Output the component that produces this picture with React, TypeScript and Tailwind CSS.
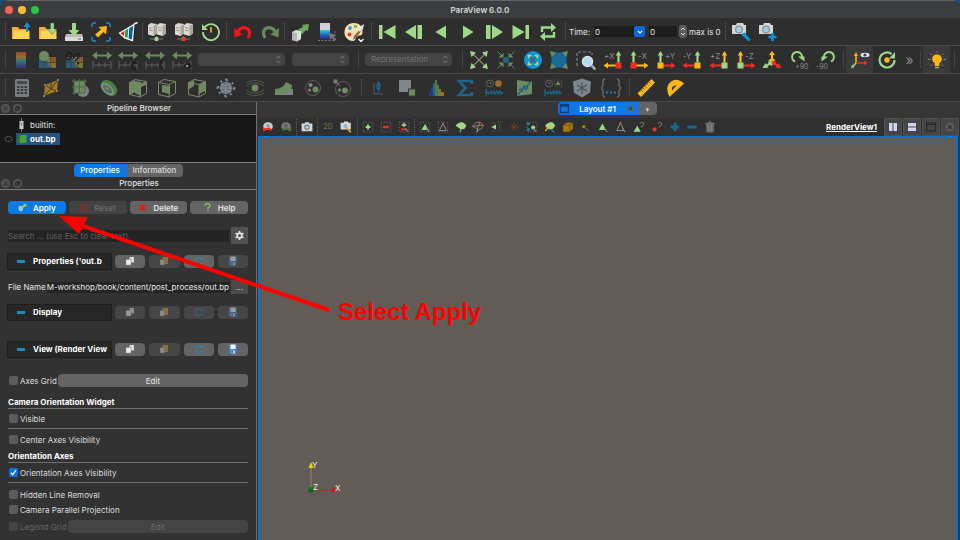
import type { ReactNode } from "react";

type Tool = { name: string; icon: ReactNode; dim?: boolean; active?: boolean };

const Svg = ({ children, size = 20 }: { children: ReactNode; size?: number }) => (
  <svg width={size} height={size} viewBox="0 0 20 20" fill="none" className="shrink-0">
    {children}
  </svg>
);

const G = "#9fd888";
const Y = "#fdb913";
const R = "#f52a22";
const B = "#1093d4";

/* ---------- shared icon parts ---------- */

const Folder = ({ children }: { children?: ReactNode }) => (
  <Svg>
    <path d="M1 5h6l1.5 2H16v10H1z" fill="#f2a93c" />
    <path d="M3 8.500h15.500V17H2z" fill="#fbd654" />
    {children}
  </Svg>
);

const Server = ({ dot }: { dot: ReactNode }) => (
  <Svg>
    {[1, 10].map((x) => (
      <g key={x} transform={`translate(${x} 0)`}>
        <path d="M0 3l3-2 6 1v9.500L5.500 14 0 12.500z" fill="#dcd7d2" />
        <path d="M5.500 4L9 2v9.500L5.500 14z" fill="#aaa49f" />
        <path d="M1 5.500l3.500.7M1 8l3.500.7" stroke="#8a847f" strokeWidth=".8" />
      </g>
    ))}
    <path d="M9.500 14v3M3 17h13" stroke="#777" strokeWidth="1" />
    {dot}
  </Svg>
);

const Rescale = ({ children }: { children?: ReactNode }) => (
  <Svg>
    <path d="M0 5.500l5-4v3h10v-3l5 4-5 4v-3H5v3z" fill={G} />
    <path d="M1 11v8M19 11v8M1 15h18M7 12.500v5M13 12.500v5" stroke="#888" strokeWidth="1" />
    {children}
  </Svg>
);

const Cells = () => (
  <>
    <rect x="1" y="7" width="17" height="11" fill="#2c86b8" />
    <path d="M7 7h11v11l-6-1z" fill="#c8b23f" />
    <path d="M13 7h5v6h-5z" fill="#d97a2a" />
    <path d="M1 12.500h17M6.500 7v11M12.500 7v11" stroke="#4c4c4c" strokeWidth=".7" />
  </>
);

const CubeEdges = () => (
  <path
    d="M1.500 4.500L7 1.500l11.500 2v12L12 19 1.500 16.500zM1.500 4.500L12 6.500l6.500-3M12 6.500V19"
    stroke="#c8cba0"
    strokeWidth="1"
  />
);

const Corners = ({ color }: { color: string }) => (
  <path
    d="M1 1l6 1.500L2.500 7zM19 1l-6 1.500L17.500 7zM1 19l6-1.500L2.500 13zM19 19l-6-1.500 4.500-4.500z"
    fill={color}
  />
);

type ViewAxisProps = { label: string; side: "left" | "right"; up: string; across: string; box: string };

const ViewAxis = ({ label, side, up, across, box }: ViewAxisProps) => (
  <Svg>
    <g transform={side === "right" ? "translate(20 0) scale(-1 1)" : undefined}>
      <path d="M4.500 1L7.300 5.500H5.600v7H3.400v-7H1.700z" fill={up} />
      <path d="M19.500 15.500L15 18.500v-2H7v-2h8v-2z" fill={across} />
      <rect x="1.500" y="12.500" width="6" height="6" fill={box} />
    </g>
    <text
      x={side === "right" ? 1 : 9}
      y="9"
      fontSize="8"
      fill="#8c8c8c"
      fontFamily="Inter, sans-serif"
    >
      {label}
    </text>
  </Svg>
);

const Camera = ({ children }: { children?: ReactNode }) => (
  <Svg>
    <path d="M1 3h4l1-2h6l1 2h2v9H1z" fill="#d6d6d4" />
    <circle cx="8" cy="7.500" r="4" fill="#8b9299" />
    <circle cx="8" cy="7.500" r="2.700" fill="#9fd0ea" />
    {children}
  </Svg>
);

/* ---------- first toolbar ---------- */

const fileTools: Tool[] = [
  { name: "Open", icon: <Folder><path d="M16 0l3.500 5H17v5h-2V5h-2.500z" fill={B} /></Folder> },
  {
    name: "Load state",
    icon: <Folder><path d="M12.500 1h3.500v6h3l-4.700 5.500L9.500 7h3z" fill={G} stroke="#3f6a35" strokeWidth=".5" /></Folder>,
  },
  {
    name: "Save data",
    icon: (
      <Svg>
        <path d="M2 12h16l1 3v4H1v-4z" fill="#b9b9b9" />
        <path d="M1 15h18v4H1z" fill="#dadada" />
        <path d="M14 17h3" stroke="#666" />
        <path d="M8 1h4v7h3.500L10 14 4.500 8H8z" fill={G} />
      </Svg>
    ),
  },
  {
    name: "Reset session",
    icon: (
      <Svg>
        <path d="M1 5V3q0-2 2-2h2M15 1h2q2 0 2 2v2M19 15v2q0 2-2 2h-2M5 19H3q-2 0-2-2v-2" stroke={B} strokeWidth="1.500" />
        <path d="M7.500 5l8.500-1-1 8.500-2.500-2.500L7 15.500 4 12.500 10 7.500z" fill={Y} />
      </Svg>
    ),
  },
  {
    name: "Catalyst",
    icon: (
      <Svg>
        <path d="M.5 11L16.500 1.500 15 19.500 6.500 16.500z" fill="#fff" />
        <path d="M16 2l3.500-1.500" stroke="#fff" strokeWidth="1.500" />
        <path d="M2.500 11.200l4-2.400-.5 5.500z" fill="#d2232a" />
        <path d="M7.300 8.300l3.200-1.900-1 9.600-2.700-1z" fill="#28a249" />
        <path d="M11.300 6l3.900-2.300-1.400 13.800-3.300-1.100z" fill="#0d5ba8" />
      </Svg>
    ),
  },
];

const serverTools: Tool[] = [
  { name: "Connect", icon: <Server dot={<circle cx="9.500" cy="17" r="2.200" fill={G} />} /> },
  { name: "Disconnect", icon: <Server dot={<rect x="7.500" y="15" width="4" height="4" fill="#e8432e" />} /> },
  {
    name: "Reload",
    icon: (
      <Svg>
        <path d="M3.500 5.500A8 8 0 1 1 2 10" stroke={G} strokeWidth="1.900" />
        <path d="M1 2v6h6z" fill={G} />
        <path d="M10 5v5.500" stroke={Y} strokeWidth="1.600" />
      </Svg>
    ),
  },
];

const undoTools: Tool[] = [
  {
    name: "Undo",
    icon: (
      <Svg>
        <path d="M4.500 11C7 3.500 16 4.500 16.500 10.500q0 3-1.500 5.500" stroke="#f31414" strokeWidth="3.200" />
        <path d="M1 6l.5 9.500 8-3z" fill="#f31414" />
      </Svg>
    ),
  },
  {
    name: "Redo",
    dim: true,
    icon: (
      <Svg>
        <path d="M15.500 11C13 3.500 4 4.500 3.500 10.500q0 3 1.500 5.500" stroke={G} strokeWidth="3.200" />
        <path d="M19 6l-.5 9.500-8-3z" fill={G} />
      </Svg>
    ),
  },
];

const displayTools: Tool[] = [
  {
    name: "Auto apply",
    icon: (
      <Svg>
        <path d="M2 10l4-2 5 1v8l-4 2.500-5-1.500z" fill="#dfe2dc" />
        <path d="M2 10l5 1v8.500L2 18z" fill="#b4b8b1" />
        <path d="M7 8l6-3-1-2 7-1-1 7-2-1-5 5V9z" fill="#6fa860" />
      </Svg>
    ),
  },
  {
    name: "Scalar bar",
    icon: (
      <Svg>
        <defs>
          <linearGradient id="bar" x2="0" y2="1">
            <stop offset="0" stopColor="#35c8d6" />
            <stop offset=".5" stopColor="#1d6fc4" />
            <stop offset="1" stopColor="#27277d" />
          </linearGradient>
        </defs>
        <rect x="3" y="1" width="10" height="8" fill="#cfd3d8" />
        <rect x="3" y="8" width="10" height="9" fill="url(#bar)" />
        <path d="M1 18.500h17V9" stroke="#777" strokeDasharray="2 1.500" />
        <path d="M12 11l7 2-2.500 1.500 2.500 3-1.500 1.500-2.800-3-1.700 2z" fill="#777" />
      </Svg>
    ),
  },
  {
    name: "Palette",
    icon: (
      <Svg>
        <path d="M10 1C4 1 .5 5 .5 10.500S5 19 9 19c3 0 2-3 4-4.500s5.500 0 5.500-4.500C18.500 4 15 1 10 1z" fill="#fbe0b5" />
        <circle cx="6" cy="6" r="1.900" fill="#2b9fd8" />
        <circle cx="11.500" cy="4.500" r="1.800" fill="#7db95f" />
        <circle cx="5.500" cy="12.500" r="2" fill="#e33b2e" />
        <path d="M18 5l1.500 1L12 16l-3 2 1-4z" fill="#8b6a3c" />
        <path d="M17 4l3-2-1 5-3 3-1.500-1.500z" fill="#e8e6e0" />
        <path d="M14.500 17l2.500 2.500 2.500-2.500" stroke="#fff" strokeWidth="1.300" />
      </Svg>
    ),
  },
];

const vcrTools: Tool[] = [
  { name: "First frame", icon: <Svg><path d="M2 3h3.500v14H2zM18.500 3v14L6.500 10z" fill={G} /></Svg> },
  { name: "Previous frame", icon: <Svg><path d="M12 3v14L1 10zM13.500 3H18v14h-4.500z" fill={G} /></Svg> },
  { name: "Reverse", icon: <Svg><path d="M15 3.500v13L4.500 10z" fill={G} /></Svg> },
  { name: "Play", icon: <Svg><path d="M5 3.500v13L15.500 10z" fill={G} /></Svg> },
  { name: "Next frame", icon: <Svg><path d="M8 3v14l11-7zM2 3h4.500v14H2z" fill={G} /></Svg> },
  { name: "Last frame", icon: <Svg><path d="M14.500 3H18v14h-3.500zM1.500 3v14l12-7z" fill={G} /></Svg> },
  {
    name: "Loop",
    icon: (
      <Svg>
        <path d="M4 10V5.500h10M16 10v4.500H6" stroke={G} strokeWidth="2.400" />
        <path d="M13 1l5 4.500-5 4.500zM7 10l-5 4.500L7 19z" fill={G} />
      </Svg>
    ),
  },
];

const cameraTools: Tool[] = [
  {
    name: "Adjust camera",
    icon: <Camera><path d="M12 11.500l2-.5 1 2 4 4.500-1.500 1.500-4.500-4.500-1.500-1z" fill={B} stroke={B} /></Camera>,
  },
  { name: "Add camera link", icon: <Camera><path d="M14.500 11v8M10.500 15h8" stroke={B} strokeWidth="2.600" /></Camera> },
];

/* ---------- second toolbar ---------- */

const colorTools: Tool[] = [
  {
    name: "Edit color map",
    dim: true,
    icon: (
      <Svg>
        <defs>
          <linearGradient id="map" x2="0" y2="1">
            <stop offset="0" stopColor="#e8562f" />
            <stop offset=".3" stopColor="#f3a32f" />
            <stop offset=".55" stopColor="#43b7b0" />
            <stop offset=".8" stopColor="#2f6ad0" />
            <stop offset="1" stopColor="#5b3aa5" />
          </linearGradient>
        </defs>
        <rect x="5" y="2" width="10" height="16" fill="url(#map)" />
      </Svg>
    ),
  },
  { name: "Use separate map", dim: true, icon: <Svg><Cells /><circle cx="6" cy="6" r="5" fill={G} /></Svg> },
  {
    name: "Unlink map",
    dim: true,
    icon: (
      <Svg>
        <Cells />
        <path d="M2 4q3-4 5 1l-3 5q-4 0-2-6M8 9l3-5q4-2 3 3l-4 4M3 1l2 2M12 12l2 2" stroke="#111" strokeWidth="1.500" />
      </Svg>
    ),
  },
  { name: "Rescale to data", dim: true, icon: <Rescale /> },
  {
    name: "Rescale to custom",
    dim: true,
    icon: <Rescale><path d="M19 13q-4-2-5 2t4 4" stroke="#111" strokeWidth="2" /></Rescale>,
  },
  {
    name: "Rescale over time",
    dim: true,
    icon: <Rescale><path d="M17 11q-4 4 0 8" stroke="#111" strokeWidth="2" /></Rescale>,
  },
  {
    name: "Rescale to visible",
    dim: true,
    icon: <Rescale><ellipse cx="15.500" cy="16" rx="4" ry="2.500" fill="#111" /><circle cx="15" cy="16" r="1.300" fill="#ddd" /></Rescale>,
  },
];

const viewTools: Tool[] = [
  { name: "Reset camera", icon: <Svg><path d="M3 3l14 14M17 3L3 17" stroke="#8a8d66" strokeWidth="1.200" /><Corners color={G} /></Svg> },
  {
    name: "Zoom to data",
    dim: true,
    icon: (
      <Svg>
        <path d="M7.500 7.500H2.500l5-5zM12.500 7.500v-5l5 5zM7.500 12.500v5l-5-5zM12.500 12.500h5l-5 5z" fill={G} />
        <path d="M1.500 1.500l4 4M18.500 1.500l-4 4M1.500 18.500l4-4M18.500 18.500l-4-4" stroke={G} strokeWidth="1" />
        <circle cx="10" cy="10" r="3" fill={B} />
      </Svg>
    ),
  },
  {
    name: "Reset camera closest",
    icon: (
      <Svg>
        <circle cx="10" cy="10" r="9" fill={B} />
        <path d="M6 6l8 8M14 6l-8 8" stroke="#555" strokeWidth="1.200" />
        <path d="M4.500 4.500l4.500.5-4 4zM15.500 4.500L11 5l4 4zM4.500 15.500L9 15l-4-4zM15.500 15.500L11 15l4-4z" fill={G} />
      </Svg>
    ),
  },
  { name: "Zoom closest", dim: true, icon: <Svg><rect x="2.500" y="2.500" width="15" height="15" rx="4" fill="#0aa0f0" /><Corners color={G} /></Svg> },
  {
    name: "Zoom to box",
    icon: (
      <Svg>
        <path d="M1 16V2h15v3" stroke="#888" strokeWidth="1.200" strokeDasharray="3 2" />
        <path d="M15.500 15.500l4 4" stroke="#aaa" strokeWidth="2.600" />
        <circle cx="11.500" cy="11.500" r="5" fill="#b5dcf3" stroke="#dce4e8" strokeWidth="1.500" />
      </Svg>
    ),
  },
  { name: "View +X", icon: <ViewAxis label="+X" side="right" up={G} across={Y} box={R} /> },
  { name: "View -X", icon: <ViewAxis label="-X" side="left" up={G} across={Y} box={R} /> },
  { name: "View +Y", icon: <ViewAxis label="+Y" side="left" up={G} across={R} box={Y} /> },
  { name: "View -Y", icon: <ViewAxis label="-Y" side="right" up={G} across={R} box={Y} /> },
  { name: "View +Z", icon: <ViewAxis label="+Z" side="right" up={Y} across={R} box={G} /> },
  { name: "View -Z", icon: <ViewAxis label="-Z" side="left" up={Y} across={R} box={G} /> },
  {
    name: "Isometric view",
    icon: (
      <Svg>
        <path d="M10 1l3 4h-2v5H9V5H7z" fill={Y} />
        <path d="M8 12l-3.500 2.500-1-1.500L.5 18l6-.3-1-1.500L9 14z" fill={G} />
        <path d="M12 12l3.500 2.500 1-1.500 3 5-6-.3 1-1.500L11 14z" fill={R} />
        <path d="M6.500 10l3.500-2 3.500 2-3.500 2z" fill={Y} />
        <path d="M6.500 10l3.500 2v4l-3.500-2z" fill={G} />
        <path d="M13.500 10L10 12v4l3.500-2z" fill={R} />
      </Svg>
    ),
  },
  {
    name: "Rotate +90",
    icon: (
      <Svg>
        <path d="M6 11.500A5 5 0 1 1 13 8" stroke={G} strokeWidth="2" />
        <path d="M9 6.500h6.500v5z" fill={G} />
        <text x="6" y="19" fontSize="7" fill="#8c8c8c" fontFamily="Inter, sans-serif">+90</text>
      </Svg>
    ),
  },
  {
    name: "Rotate -90",
    icon: (
      <Svg>
        <path d="M15 11.500A5 5 0 1 0 8 8" stroke={G} strokeWidth="2" />
        <path d="M12 6.500H5.500v5z" fill={G} />
        <text x="0" y="19" fontSize="7" fill="#8c8c8c" fontFamily="Inter, sans-serif">-90</text>
      </Svg>
    ),
  },
];

const axesTools: Tool[] = [
  {
    name: "Orientation axes",
    active: true,
    icon: (
      <Svg>
        <path d="M6 13V5" stroke={Y} strokeWidth="1.500" />
        <path d="M6 2l2 4H4z" fill={Y} />
        <path d="M6 13h9" stroke={R} strokeWidth="1.500" />
        <path d="M17.500 13L14 15.200v-4.400z" fill={R} />
        <path d="M6 13l-3.500 4" stroke={G} strokeWidth="1.500" />
        <path d="M1 18.500l1-4 2.500 2.500z" fill={G} />
        <ellipse cx="15" cy="5" rx="4.500" ry="2.200" fill="#e8e8f4" />
        <circle cx="15" cy="5" r="1.600" fill="#3a3a8c" />
      </Svg>
    ),
  },
  {
    name: "Show center",
    icon: (
      <Svg>
        <path d="M14.500 4A7.500 7.500 0 1 0 17.500 10" stroke={G} strokeWidth="2.200" />
        <path d="M18 2v6.500h-6z" fill={G} />
        <circle cx="10" cy="10" r="2.700" fill={Y} />
      </Svg>
    ),
  },
];

const lightTools: Tool[] = [
  {
    name: "Light kit",
    active: true,
    icon: (
      <Svg>
        <path d="M10 4.500a4.500 4.500 0 0 1 2.300 8.500v3H7.700v-3A4.500 4.500 0 0 1 10 4.500z" fill={Y} />
        <path d="M8 17.500h4" stroke="#aaa" strokeWidth="1.500" />
        <path d="M10 1v1.500M3.500 3.500l1.500 1.500M16.500 3.500L15 5M1 9.500h2.500M16.500 9.500H19M3.500 16L5 14.500M16.500 16L15 14.500" stroke="#8f8a70" strokeWidth="1" />
      </Svg>
    ),
  },
];

/* ---------- third toolbar ---------- */

const filterTools: Tool[] = [
  {
    name: "Calculator",
    dim: true,
    icon: (
      <Svg>
        <rect x="3" y="1" width="14" height="18" rx="1.500" fill="#b4bcc4" />
        <rect x="5" y="3" width="10" height="3" fill="#55606a" />
        {[8, 11, 14].map((y) => (
          <path key={y} d={`M5 ${y + 1}h2.500M8.800 ${y + 1}h2.500M12.500 ${y + 1}h2.500`} stroke="#444" strokeWidth="1.800" />
        ))}
      </Svg>
    ),
  },
  {
    name: "Contour",
    dim: true,
    icon: (
      <Svg>
        <path d="M4 7l13-5-1 11-13 5z" fill="#ffb81a" />
        <path d="M4 7l6 4 7-9M10 11l6 2M10 11l-7 7M10 11V4" stroke="#5d4c18" strokeWidth="1" />
        <path d="M3 6h2v2H3zM16 1h2v2h-2zM15 12h2v2h-2zM2 17h2v2H2z" fill="#c9c3a0" />
      </Svg>
    ),
  },
  {
    name: "Clip",
    dim: true,
    icon: (
      <Svg>
        <circle cx="13" cy="13" r="6" fill="#b8cdd8" />
        <rect x="4" y="3" width="11" height="12" fill={G} />
        <path d="M2 3h15M2 9h14M2 15h13M4 1v16M9.500 1v15M15 1v14" stroke="#6f9a60" strokeWidth="1" />
      </Svg>
    ),
  },
  {
    name: "Slice",
    dim: true,
    icon: (
      <Svg>
        <ellipse cx="10" cy="10" rx="9.500" ry="6.500" transform="rotate(42 10 10)" fill="#5fbf4c" />
        <ellipse cx="8.500" cy="11" rx="8" ry="4.500" transform="rotate(42 8.500 11)" fill="#c5dcc0" />
        <ellipse cx="8.500" cy="11" rx="5.500" ry="2.700" transform="rotate(42 8.500 11)" fill="#4d9dc2" />
        <ellipse cx="8" cy="10.500" rx="2.500" ry="1.200" transform="rotate(42 8 10.500)" fill={Y} />
      </Svg>
    ),
  },
  { name: "Threshold", dim: true, icon: <Svg><path d="M2 5l5-3v12l-5 3zM7 3l6 1v2l5-2v3l-5 2v9l-6-3z" fill={G} /><CubeEdges /></Svg> },
  { name: "Extract subset", dim: true, icon: <Svg><path d="M5 7l8 1v8l-8-2z" fill={G} /><CubeEdges /></Svg> },
  { name: "Extract region", dim: true, icon: <Svg><path d="M2 5l5-3v6l-5 3zM12 7l6-3v9l-6 3z" fill={G} /><CubeEdges /></Svg> },
  {
    name: "Glyph",
    dim: true,
    icon: (
      <Svg>
        <circle cx="10" cy="10" r="6.500" fill="#8aa4b8" />
        <path d="M4 10h12M10 4v12M5 6q5 3 10 0M5 14q5-3 10 0M7 5q-3 5 0 10M13 5q3 5 0 10" stroke="#dde6ec" strokeWidth=".9" />
        <circle cx="10" cy="10" r="8" stroke="#dde6ec" strokeWidth="1.600" strokeDasharray="2 4.283" />
        <path d="M10 .5v2M10 17.500v2M.5 10h2M17.500 10h2" stroke="#dde6ec" strokeWidth="1.500" />
      </Svg>
    ),
  },
  {
    name: "Stream tracer",
    dim: true,
    icon: (
      <Svg>
        <path d="M1 5q9-5 18 0M1 8q9-6 18 0M1 12q9 6 18 0M1 15q9 5 18 0" stroke="#737a60" strokeWidth="1" />
        <circle cx="10" cy="10" r="3.400" fill={G} />
      </Svg>
    ),
  },
  {
    name: "Warp",
    dim: true,
    icon: <Svg><path d="M1 12h9l9-1v6H1z" fill="#c0cad0" /><path d="M1 11q8 0 11-7l6 3q0 8-8 9H1z" fill={G} /></Svg>,
  },
  {
    name: "Group datasets",
    dim: true,
    icon: (
      <Svg>
        <circle cx="10" cy="10" r="7.500" stroke="#888" strokeWidth="1" />
        <circle cx="7.500" cy="7" r="2" fill="#c6d0d6" />
        <circle cx="12.500" cy="11.500" r="3" fill={G} />
        <circle cx="6.500" cy="12" r="1.500" fill="#c6d0d6" />
      </Svg>
    ),
  },
  {
    name: "Extract group",
    dim: true,
    icon: (
      <Svg>
        <circle cx="11" cy="11" r="7.500" stroke="#888" strokeWidth="1" />
        <circle cx="3.500" cy="3.500" r="2.200" fill="#a4bccb" />
        <path d="M4 4l4 4" stroke="#a4bccb" />
        <circle cx="13" cy="12.500" r="3" fill={G} />
        <circle cx="7.500" cy="12" r="1.500" fill="#c6d0d6" />
      </Svg>
    ),
  },
];

const Wave = () => <path d="M2 18.500V11M2 16l2-2 1 2 2-3 1 3 2-3 1 3 2-3 1 3 2-3 1 3 2-2" stroke={B} strokeWidth="1.300" />;

const analysisTools: Tool[] = [
  {
    name: "Plot over line",
    dim: true,
    icon: <Svg><path d="M6 5v11h9" stroke="#7a8187" strokeWidth="1" /><path d="M10.500 3v12M9 6q1.500-2 3 0v5q-1.500 2-3 0z" stroke={B} strokeWidth="1.200" /></Svg>,
  },
  {
    name: "Histogram view",
    dim: true,
    icon: <Svg><rect x="2" y="2" width="12" height="12" fill="#c3cfd7" /><rect x="11.500" y="11" width="7" height="7" fill={G} stroke="#33402e" /></Svg>,
  },
  {
    name: "Histogram",
    dim: true,
    icon: (
      <Svg>
        <path d="M3 18v-5h2v5zM5 18V9h2v9z" fill="#2740d8" />
        <path d="M7 18V5h2v13z" fill={B} />
        <path d="M9 18V2h2v16zM11 18V7h2v11z" fill="#6fc053" />
        <path d="M13 18v-7h2v7zM15 18v-4h3v4z" fill="#eea617" />
      </Svg>
    ),
  },
  { name: "Integrate", dim: true, icon: <Svg><path d="M17 6V3H4l6.500 7L4 17h13v-3" stroke={B} strokeWidth="2.600" /></Svg> },
  {
    name: "Plot selection over time",
    dim: true,
    icon: <Svg><circle cx="6" cy="5.500" r="3.500" stroke="#888" /><path d="M6 3.500v2h2" stroke="#888" /><circle cx="14.500" cy="5.500" r="3.300" fill="#f0a51e" /><Wave /></Svg>,
  },
  {
    name: "Probe",
    dim: true,
    icon: <Svg><path d="M3 2l13 2 2-1v13L3 18z" fill={G} /><path d="M3 17L17 4M5 12l2-1 1 2 2-5 2 4 2-4" stroke="#1d8fcf" strokeWidth="1.500" /></Svg>,
  },
  {
    name: "Plot data over time",
    dim: true,
    icon: <Svg><circle cx="6" cy="5.500" r="3.500" stroke="#888" /><path d="M6 3.500v2h2" stroke="#888" /><path d="M15 3l2.500 4h-5z" fill={G} /><path d="M11.500 2h7v7h-7z" stroke="#777" strokeDasharray="1 1" /><Wave /></Svg>,
  },
  {
    name: "Programmable filter",
    icon: (
      <Svg>
        <path d="M10 .5l9 3-1 11-8 5-8-5-1-11z" fill="#7b868e" />
        <path d="M10 4v12M5 7l10 6M15 7L5 13" stroke="#485158" strokeWidth="1.200" />
      </Svg>
    ),
  },
  {
    name: "Python calculator",
    icon: (
      <Svg>
        <path d="M4 1Q1.500 1 2 5t-2 5q2.500 1 2 5t2 4M16 1q2.500 0 2 4t2 5q-2.500 1-2 5t-2 4" stroke="#707070" strokeWidth="1.300" />
        <path d="M5 14.500h2M9 14.500h2M13 14.500h2" stroke="#257ba3" strokeWidth="1.800" />
      </Svg>
    ),
  },
];

const measureTools: Tool[] = [
  {
    name: "Ruler",
    icon: <Svg><path d="M15.500 1L19 4.500 5 19 1.500 15.500z" fill={Y} /><path d="M13 4l1.500 1.500M11 6l1.500 1.500M9 8l1.500 1.500M7 10l1.500 1.500M5 12l1.500 1.500" stroke="#7d5a06" strokeWidth="1" /></Svg>,
  },
  {
    name: "Protractor",
    icon: <Svg><path d="M4.500 19Q-.5 9 5.500 4T19 5.500z" fill={Y} /><path d="M7 12.500Q6 7.500 11.500 7.500z" fill="#2e2e2e" /></Svg>,
  },
];

/* ---------- render view toolbar ---------- */

const DashBox = () => <path d="M2 2h16v16H2z" stroke="#6e6e6e" strokeWidth="1.500" strokeDasharray="2 2.500" />;
const Cursor = () => <path d="M12 12l5 6" stroke="#8a8a8a" strokeWidth="1.800" />;
const Ball = ({ dim }: { dim?: boolean }) => (
  <>
    <path d="M2 10Q2 2 10 2t8 8q0 3-4 5H7q-5-2-5-5z" fill={dim ? "#787878" : "#cfcfcf"} />
    <circle cx="10" cy="8" r="3" fill={dim ? "#555f5c" : "#7fa7bc"} />
  </>
);

const undoViewTools: Tool[] = [
  { name: "Camera undo", icon: <Svg size={12}><Ball /><path d="M1 10l1 8 6-3q5-2 7 3 2-7-4-7l-5 1z" fill={R} /></Svg> },
  { name: "Camera redo", icon: <Svg size={12}><Ball dim /><path d="M19 10l-1 8-6-3q-5-2-7 3-2-7 4-7l5 1z" fill="#53704b" /></Svg> },
];

const captureTools: Tool[] = [
  {
    name: "Capture screenshot",
    icon: <Svg size={12}><path d="M1 4h5l1-2h6l1 2h5v13H1z" fill="#d8d8d8" /><circle cx="10" cy="10.500" r="4.500" fill="#697a88" /><circle cx="10" cy="10.500" r="2.500" fill="#b3d3e6" /></Svg>,
  },
];

const zoomTools: Tool[] = [
  { name: "2D mode", icon: <span className="text-[7px] font-medium text-[#6b6a4c]">2D</span> },
  {
    name: "Adjust view camera",
    icon: <Svg size={12}><path d="M1 3h5l1-2h6l1 2h4v11H1z" fill="#d8d8d8" /><circle cx="9" cy="8.500" r="3.500" fill="#8fb8cf" /><path d="M11 11l7 8" stroke="#d9a83a" strokeWidth="3" /></Svg>,
  },
];

const modifyTools: Tool[] = [
  { name: "Add selection", icon: <Svg size={12}><DashBox /><path d="M10 6v8M6 10h8" stroke={G} strokeWidth="3" /></Svg> },
  { name: "Subtract selection", icon: <Svg size={12}><DashBox /><path d="M5 10h10" stroke={R} strokeWidth="4" /></Svg> },
  { name: "Toggle selection", icon: <Svg size={12}><DashBox /><path d="M10 3v7M6 6.500h8" stroke={G} strokeWidth="2.500" /><path d="M5 14h10" stroke={R} strokeWidth="3" /><Cursor /></Svg> },
];

const selectTools: Tool[] = [
  { name: "Select cells", icon: <Svg size={12}><DashBox /><path d="M10 5l6 10H4z" fill={G} /><Cursor /></Svg> },
  { name: "Select points", icon: <Svg size={12}><DashBox /><path d="M10 4l6 12H4z" stroke="#9a9a9a" strokeWidth="1.500" /><circle cx="10" cy="4" r="1.800" fill="#c74a36" /></Svg> },
  { name: "Select cells through", icon: <Svg size={12}><path d="M1 8Q5 1 13 2l6 5-3 6-6 1-3-2z" fill={G} /><path d="M10 14l-2 5" stroke="#aaa" strokeWidth="2" /></Svg> },
  { name: "Select points through", icon: <Svg size={12}><path d="M1 9Q5 1 13 2l6 5-3 6-6 1-3-2-6-3zM1 9l17-2M9 13l4-11" stroke="#a0807a" strokeWidth="1.500" /><path d="M10 14l-2 5" stroke="#aaa" strokeWidth="2" /></Svg> },
  { name: "Polygon cells", icon: <Svg size={12}><path d="M2 10l8-4v8z" fill={G} /><path d="M13 2h5M14 17l4-4M16 6v5M4 3h5M4 17h5" stroke="#777" strokeWidth="1.500" strokeDasharray="2 2" /></Svg> },
  { name: "Polygon points", icon: <Svg size={12}><path d="M4 4l12 12M16 4L4 16M10 2v16M3 10h14" stroke="#a8432f" strokeWidth="1.500" strokeDasharray="2 2" /></Svg> },
  { name: "Select block", icon: <Svg size={12}><DashBox /><path d="M2 3h4v4H2zM2 12h4v4H2z" fill={B} /><circle cx="12" cy="11" r="3.500" fill={G} /><Cursor /></Svg> },
  { name: "Interactive cells", icon: <Svg size={12}><path d="M2 8Q6 1 14 2l5 5-4 6-6 1-4-2z" fill={G} /><path d="M2 17L9 8l5 3" stroke={Y} strokeWidth="2" /><path d="M12 14l5 5" stroke={B} strokeWidth="2" /></Svg> },
  { name: "Interactive block", icon: <Svg size={12}><path d="M2 7l6-4h10v10l-5 5H2z" fill="#a87e12" /><path d="M2 7h11v11M13 7l5-4" stroke="#5e4708" strokeWidth="1.300" /></Svg> },
  { name: "Hover points", icon: <Svg size={12}><circle cx="8" cy="9" r="2.500" fill="#b88b1c" /><path d="M11 12l4 4" stroke="#888" strokeWidth="1.500" /></Svg> },
  { name: "Grow cells", icon: <Svg size={12}><path d="M9 4l6 11H3z" fill={G} /><Cursor /></Svg> },
  { name: "Grow points", icon: <Svg size={12}><path d="M9 3l6 13H3z" stroke="#9a9a9a" strokeWidth="1.500" /><circle cx="9" cy="3" r="2" fill="#c74a36" /><Cursor /></Svg> },
  { name: "Query cells", icon: <Svg size={12}><path d="M7 8l6 10H1z" fill={G} /><path d="M12 4q3-4 6 0 0 3-4 5v2" stroke="#6f7060" strokeWidth="1.800" /></Svg> },
  { name: "Query points", icon: <Svg size={12}><circle cx="6" cy="14" r="3.500" fill="#dd3d2b" /><path d="M12 4q3-4 6 0 0 3-4 5v2" stroke="#6f7060" strokeWidth="1.800" /></Svg> },
  { name: "Grow selection", icon: <Svg size={12}><path d="M10 3v14M3 10h14" stroke="#17698f" strokeWidth="5" /></Svg> },
  { name: "Shrink selection", icon: <Svg size={12}><path d="M2 10h16" stroke="#17698f" strokeWidth="5" /></Svg> },
  { name: "Clear selection", icon: <Svg size={12}><path d="M3 5h14l-1 14H4z" fill="#6b6b6b" /><path d="M2 4h16M7 2h6M8 7v9M12 7v9" stroke="#8a8a8a" strokeWidth="1.500" /></Svg> },
];

const Tools = ({ items, className }: { items: Tool[]; className: string }) => (
  <div className={`flex h-full shrink-0 ${className}`}>
    {items.map((t) => (
      <button
        key={t.name}
        type="button"
        aria-label={t.name}
        className={`flex h-full min-w-0 flex-1 items-center justify-center ${t.active ? "bg-[#3a3a3a]" : ""}`}
      >
        <span className={t.dim ? "flex opacity-55" : "flex"}>{t.icon}</span>
      </button>
    ))}
  </div>
);

const Handle = ({ className = "mx-1" }: { className?: string }) => (
  <div className={`h-[17px] w-0 shrink-0 border-l border-dotted border-[#5c5c5c] ${className}`} />
);

const Toolbar = ({ children }: { children: ReactNode }) => (
  <div className="flex h-7 items-center overflow-hidden border-b border-[#4a4a4a] bg-[#2e2e2e]">{children}</div>
);

const Picker = ({ label, className }: { label: string; className: string }) => (
  <div className={`relative shrink-0 ${className}`}>
    <select
      aria-label={label || "Coloring"}
      disabled
      className="block h-[13px] w-full appearance-none rounded bg-[#444] pl-1.5 text-[8px] leading-[13px] text-[#747474]"
    >
      <option>{label}</option>
    </select>
    <svg width="5" height="9" viewBox="0 0 5 9" fill="none" className="absolute top-0.5 right-1">
      <path d="M.5 3.200l2-2 2 2M.5 5.800l2 2 2-2" stroke="#858585" />
    </svg>
  </div>
);

/* ---------- left dock ---------- */

const DockTitle = ({ children }: { children: string }) => (
  <div className="relative flex h-[13px] items-center justify-center border-b border-[#7b7b7b] pl-[22px] text-[8px] font-medium text-[#e2e2e2]">
    <div className="absolute left-px flex gap-[3px]">
      {["M3 3l4 4M7 3L3 7", "M4 3h3v3M3 4h3v3H3z"].map((d, i) => (
        <button key={d} type="button" aria-label={i ? "Float" : "Close"}>
          <svg width="9" height="9" viewBox="0 0 10 10" fill="none">
            <circle cx="5" cy="5" r="4.500" fill="#505050" stroke="#6a6a6a" strokeWidth=".6" />
            <path d={d} stroke="#222" strokeWidth="1" />
          </svg>
        </button>
      ))}
    </div>
    <h2>{children}</h2>
  </div>
);

const actions = [
  {
    label: "Apply",
    className: "bg-[#0a7ae8] text-white",
    icon: <Svg size={9}><path d="M1 8l5-2 5 2v8l-5 3-5-3z" fill="#b9bdb4" /><path d="M8 8l5-4-1-3 7 1v6l-2-1-6 4z" fill="#8fd070" /></Svg>,
  },
  {
    label: "Reset",
    className: "bg-[#424242] text-[#6b6b6b]",
    icon: <Svg size={9}><circle cx="10" cy="10" r="8" stroke="#8e2c2c" strokeWidth="2.500" /><path d="M4 16L16 4" stroke="#8e2c2c" strokeWidth="2.500" /></Svg>,
  },
  {
    label: "Delete",
    className: "bg-[#646464] text-[#e6e6e6]",
    icon: <Svg size={9}><path d="M5 4l10 12M15 4L5 16" stroke="#f01212" strokeWidth="5" /></Svg>,
  },
  {
    label: "Help",
    className: "bg-[#646464] text-[#e6e6e6]",
    icon: <Svg size={9}><path d="M4 6q1-5 6-5t6 5q0 3-5 5v3" stroke="#86c56c" strokeWidth="2.800" /><path d="M11 16.500v3" stroke="#86c56c" strokeWidth="3" /></Svg>,
  },
];

const sectionIcons = [
  { name: "Copy", icon: <Svg size={10}><path d="M9 2h9v11H9z" fill="#d8dcdb" /><path d="M2 7h10v11H2z" fill="#eef0ef" stroke="#888" /></Svg> },
  { name: "Paste", icon: <Svg size={10}><path d="M7 2h11v14H7z" fill="#d69b35" /><path d="M2 7h9v11H2z" fill="#d4d4d0" stroke="#777" /></Svg> },
  { name: "Restore defaults", icon: <Svg size={10}><path d="M3 9q1-6 7-6 4 0 6 3M17 11q-1 6-7 6-4 0-6-3" stroke="#2689b0" strokeWidth="2.200" /><path d="M18 2v6h-5zM2 18v-6h5z" fill="#2689b0" /></Svg> },
  { name: "Save defaults", icon: <Svg size={10}><path d="M2 1h14l2 2v16H2z" fill="#3d7fd0" /><path d="M5 1h10v9H5z" fill="#f4f7fb" /><path d="M6 13h8v6H6z" fill="#c7d3e2" /><path d="M7 14h2.500v4H7z" fill="#243f66" /></Svg> },
];

const Section = ({ title, enabled, className }: { title: string; enabled: boolean[]; className: string }) => (
  <div className={`flex h-4 items-center gap-[3px] ${className}`}>
    <button
      type="button"
      className="-ml-px flex h-[17px] w-[105px] shrink-0 items-center gap-2 border border-[#1d1d1d] bg-[#272727] pl-[9px] text-left text-[8px] font-bold text-white"
    >
      <span className="h-[3px] w-2 shrink-0 bg-[#1e8db8]" />
      <span className="whitespace-nowrap">{title}</span>
    </button>
    <div className="grid flex-1 grid-cols-4 gap-1">
      {sectionIcons.map((s, i) => (
        <button
          key={s.name}
          type="button"
          aria-label={s.name}
          disabled={!enabled[i]}
          className={`flex h-[13px] items-center justify-center rounded ${enabled[i] ? "bg-[#646464]" : "bg-[#464646]"}`}
        >
          <span className={enabled[i] ? "flex" : "flex opacity-50"}>{s.icon}</span>
        </button>
      ))}
    </div>
  </div>
);

type CheckProps = { label: string; checked?: boolean; disabled?: boolean; className?: string };

const Check = ({ label, checked, disabled, className = "h-[13px]" }: CheckProps) => (
  <label
    className={`relative flex shrink-0 items-center gap-0.5 pl-px text-[8px] whitespace-nowrap ${
      disabled ? "text-[#656565]" : "text-[#dedede]"
    } ${className}`}
  >
    <input
      type="checkbox"
      defaultChecked={checked}
      disabled={disabled}
      className="peer size-[9px] appearance-none rounded-xs bg-[#5c5c5c] checked:bg-[#0a6fe8] disabled:bg-[#454545]"
    />
    <svg width="9" height="9" viewBox="0 0 9 9" fill="none" className="pointer-events-none absolute left-px hidden peer-checked:block">
      <path d="M2 4.700l1.800 2L7 2" stroke="#fff" strokeWidth="1.300" />
    </svg>
    {label}
  </label>
);

const Heading = ({ children, className }: { children: string; className: string }) => (
  <h3 className={`h-[13px] border-b border-[#6e6e6e] text-[8px] leading-[12px] font-bold text-white ${className}`}>{children}</h3>
);

const LeftDock = () => (
  <aside className="flex w-[257px] shrink-0 flex-col border-r border-[#6f6f6f] bg-[#323232]">
    <DockTitle>Pipeline Browser</DockTitle>
    <ul className="h-12 border-b border-[#7b7b7b] bg-[#171717] pt-[3px] text-[8px] text-[#e4e4e4]">
      <li className="flex h-[14px] items-center gap-1 pl-[17px]">
        <svg width="9" height="14" viewBox="0 0 9 14" fill="none">
          <path d="M4.500 0v14" stroke="#777" />
          <rect x="2.500" y="3" width="4" height="8" fill="#d0d0d0" />
          <path d="M3.500 5h2M3.500 7h2" stroke="#666" />
        </svg>
        builtin:
      </li>
      <li className="flex h-[14px] items-center gap-[3px] pl-1">
        <svg width="9" height="8" viewBox="0 0 9 8" fill="none">
          <ellipse cx="4.500" cy="4" rx="3.500" ry="2.500" stroke="#777" strokeDasharray="2 1" />
        </svg>
        <span className="flex h-3 items-center gap-[3px] bg-[#27517f] pr-1 pl-px font-bold text-white">
          <Svg size={10}>
            <path d="M1 3l5-2v18l-5-3z" fill="#2a7d27" />
            <path d="M6 3l13-2v16L6 19z" fill="#44a53b" />
          </Svg>
          out.bp
        </span>
      </li>
    </ul>
    <div role="tablist" className="flex h-[14px] items-center justify-center text-[8px] font-medium">
      <button type="button" role="tab" aria-selected="true" className="h-[13px] w-[53px] rounded-l bg-[#0a7ae8] text-white">
        Properties
      </button>
      <button type="button" role="tab" aria-selected="false" className="h-[13px] w-14 rounded-r bg-[#646464] text-[#dcdcdc]">
        Information
      </button>
    </div>
    <DockTitle>Properties</DockTitle>

    <form className="flex flex-col px-2 pt-[11px]">
      <div className="grid grid-cols-4 gap-[3px]">
        {actions.map((a) => (
          <button
            key={a.label}
            type="button"
            className={`flex h-[13px] items-center justify-center gap-1.5 rounded text-[8px] font-semibold ${a.className}`}
          >
            {a.icon}
            {a.label}
          </button>
        ))}
      </div>

      <div className="mt-[13px] flex h-[17px] items-center gap-0.5">
        <input
          type="text"
          aria-label="Search properties"
          placeholder="Search ... (use Esc to clear text)"
          className="h-3 min-w-0 flex-1 bg-[#242424] text-[8px] text-white placeholder:text-[#626262]"
        />
        <button type="button" aria-label="Advanced" className="flex size-[17px] items-center justify-center bg-[#515151]">
          <svg width="9" height="9" viewBox="0 0 10 10" fill="none">
            <circle cx="5" cy="5" r="2.600" stroke="#e6e6e6" strokeWidth="1.800" />
            <path d="M5 0v2M5 8v2M.7 2.500l1.700 1M7.600 6.500l1.700 1M.7 7.500l1.700-1M7.600 3.500l1.700-1" stroke="#e6e6e6" strokeWidth="1.800" />
          </svg>
        </button>
      </div>

      <Section title="Properties ('out.b" enabled={[true, false, true, false]} className="mt-[9px]" />
      <div className="mt-[11px] flex h-[14px] items-center text-[8px] text-[#e8e8e8]">
        <label htmlFor="file" className="shrink-0">File Name</label>
        <input
          id="file"
          type="text"
          defaultValue="M-workshop/book/content/post_process/out.bp"
          className="ml-px h-[11px] min-w-0 flex-1 bg-[#242424]"
        />
        <button type="button" aria-label="Browse" className="ml-0.5 h-[14px] w-[17px] bg-[#4a4a4a] leading-none">...</button>
      </div>
      <Section title="Display" enabled={[false, false, false, false]} className="mt-[10px]" />
      <Section title="View (Render View" enabled={[true, false, true, true]} className="mt-[21px]" />

      <div className="mt-[17px] flex items-center gap-px">
        <Check label="Axes Grid" />
        <button type="button" className="h-[13px] flex-1 rounded bg-[#646464] text-[8px] text-[#e6e6e6]">Edit</button>
      </div>

      <Heading className="mt-[9px]">Camera Orientation Widget</Heading>
      <Check label="Visible" className="h-5 border-b border-[#6e6e6e]" />
      <Check label="Center Axes Visibility" className="mt-1 h-[13px]" />
      <Heading className="mt-1">Orientation Axes</Heading>
      <Check label="Orientation Axes Visibility" checked className="h-5 border-b border-[#6e6e6e]" />
      <Check label="Hidden Line Removal" className="mt-[5px] h-[13px]" />
      <Check label="Camera Parallel Projection" className="mt-0.5 h-[13px]" />
      <div className="mt-1 flex items-center gap-px">
        <Check label="Legend Grid" disabled />
        <button type="button" disabled className="h-[13px] flex-1 rounded bg-[#444] text-[8px] text-[#6b6b6b]">Edit</button>
      </div>
    </form>
  </aside>
);

/* ---------- render view ---------- */

const layoutButtons = [
  { name: "Split horizontal", icon: <path d="M1 1h3.500v8H1zM5.500 1H9v8H5.500z" fill="#cdd6ea" /> },
  { name: "Split vertical", icon: <path d="M1 1h8v3.500H1zM1 5.500h8V9H1z" fill="#cdd6ea" /> },
  { name: "Maximize", icon: <path d="M.5 1h9v8h-9zM.5 2.500h9" stroke="#262626" strokeWidth="1.200" fill="none" /> },
  {
    name: "Close view",
    icon: <><circle cx="5" cy="5" r="4.500" fill="#5a5a5a" /><path d="M3.200 3.200l3.600 3.600M6.800 3.200L3.200 6.800" stroke="#333" strokeWidth="1.200" /></>,
  },
];

const RenderPanel = () => (
  <main className="flex min-w-0 flex-1 flex-col bg-[#363636] pl-px">
    <div className="flex h-4 items-start justify-center pr-1">
      <div className="flex h-[13px] w-[81px] items-center rounded-l bg-[#0a7ae8] text-[8px] font-semibold text-white">
        <svg width="11" height="11" viewBox="0 0 11 11" fill="none" className="ml-px">
          <path d="M1.500 1.500h8v8h-8zM1.500 3h8" stroke="#0b3c73" strokeWidth="1.500" />
        </svg>
        <span className="flex-1 text-center">Layout #1</span>
        <button type="button" aria-label="Close layout" className="mr-1">
          <svg width="9" height="9" viewBox="0 0 10 10" fill="none">
            <circle cx="5" cy="5" r="4.500" fill="#4a6b8f" />
            <path d="M3.200 3.200l3.600 3.600M6.800 3.200L3.200 6.800" stroke="#1a4a7e" strokeWidth="1.200" />
          </svg>
        </button>
      </div>
      <button type="button" className="h-[13px] w-[18px] rounded-r bg-[#646464] text-[8px] leading-none text-white">+</button>
    </div>

    <div className="flex h-[18px] items-center bg-[#2f2f2f]">
      <Tools items={undoViewTools} className="ml-px w-9" />
      <Handle className="mr-px ml-px" />
      <Tools items={captureTools} className="w-[18px]" />
      <Handle className="mx-px" />
      <Tools items={zoomTools} className="w-9" />
      <Handle className="mr-px ml-0.5" />
      <Tools items={modifyTools} className="w-[54px]" />
      <Handle className="mr-px ml-px" />
      <Tools items={selectTools} className="w-[303px]" />
      <a href="#renderview" className="ml-auto text-[8px] font-bold text-white underline">RenderView1</a>
      <div className="ml-[7px] flex gap-px pr-px">
        {layoutButtons.map((b) => (
          <button key={b.name} type="button" aria-label={b.name} className="flex h-[18px] w-[18px] items-center justify-center border border-[#505050] bg-[#454545]">
            <svg width="10" height="10" viewBox="0 0 10 10">{b.icon}</svg>
          </button>
        ))}
      </div>
    </div>

    <div id="renderview" className="relative mr-0.5 flex-1 border-2 border-b-0 border-[#0c6fd0] bg-[#625c57]">
      <svg width="44" height="40" viewBox="0 0 44 40" fill="none" className="absolute bottom-[40px] left-[44px]">
        <path d="M7 30V8" stroke="#8f8b3c" />
        <path d="M7 30h24" stroke="#b52a34" />
        <path d="M7 2l2.500 6h-5z" fill="#e0d80c" />
        <path d="M34 30l-6 2.500v-5z" fill="#e00d0d" />
        <circle cx="7" cy="30" r="2.700" fill="#0d6b14" />
        <g fill="#f0f0f0" fontSize="8" fontFamily="Inter, sans-serif">
          <text x="8" y="8">Y</text>
          <text x="9" y="30">Z</text>
          <text x="31" y="31">X</text>
        </g>
      </svg>
    </div>
  </main>
);

const App = () => {
  return (
    <div className="min-h-screen bg-[#174f8c] font-['Inter',sans-serif]">
      <div className="relative flex min-h-screen flex-col overflow-hidden rounded-t-lg bg-[#2e2e2e]">
        <header className="relative flex h-[18px] items-center justify-center border-t border-[#616566] bg-[#3a3e3f]">
          <div className="absolute left-[5px] flex gap-[5px]">
            <span className="size-2 rounded-full bg-[#fe5f57]" />
            <span className="size-2 rounded-full bg-[#febc2e]" />
            <span className="size-2 rounded-full bg-[#28c840]" />
          </div>
          <h1 className="text-[8px] font-bold text-[#c9cbcc]">ParaView 6.0.0</h1>
        </header>

        <Toolbar>
          <Handle className="mr-0.5 ml-[5px]" />
          <Tools items={fileTools} className="w-[133px]" />
          <Handle className="mx-px" />
          <Tools items={serverTools} className="w-20" />
          <Handle className="mr-0.5 ml-0.5" />
          <Tools items={undoTools} className="w-[54px]" />
          <Handle className="mr-0.5 ml-px" />
          <Tools items={displayTools} className="w-20" />
          <Handle className="mr-0.5 ml-1" />
          <Tools items={vcrTools} className="w-[187px]" />
          <Handle className="mr-[3px] ml-1" />
          <div className="flex items-center text-[8px] text-[#e8e8e8]">
            <label htmlFor="time" className="mr-1">Time:</label>
            <div className="flex items-center">
              <select id="time" className="h-[11px] w-10 appearance-none bg-[#1d1d1d] pl-px">
                <option>0</option>
              </select>
              <span className="flex size-[11px] items-center justify-center rounded-xs bg-[#0b66dc]">
                <svg width="6" height="4" viewBox="0 0 6 4" fill="none">
                  <path d="M.8.8L3 3 5.200.8" stroke="#fff" strokeWidth="1.200" />
                </svg>
              </span>
            </div>
            <input type="text" aria-label="Time step" defaultValue="0" className="ml-1 h-[11px] w-7 bg-[#1d1d1d] pl-px" />
            <svg width="8" height="13" viewBox="0 0 8 13" fill="none" className="mx-0.5">
              <rect width="8" height="13" rx="3" fill="#5c5c5c" />
              <path d="M2 5l2-2 2 2M2 8l2 2 2-2" stroke="#ddd" />
            </svg>
            max is 0
          </div>
          <Handle className="mr-0.5 ml-1" />
          <Tools items={cameraTools} className="w-[54px]" />
        </Toolbar>

        <Toolbar>
          <Handle className="mr-0.5 ml-[5px]" />
          <Tools items={colorTools} className="w-[187px]" />
          <Picker label="" className="ml-[3px] w-[87px]" />
          <Picker label="" className="ml-[7px] w-[57px]" />
          <Handle className="mr-1.5 ml-[9px]" />
          <Picker label="Representation" className="w-[87px]" />
          <Handle className="mr-[3px] ml-[10px]" />
          <Tools items={viewTools} className="w-[373px]" />
          <Handle className="mr-0.5 ml-1" />
          <Tools items={axesTools} className="w-[54px]" />
          <button type="button" aria-label="More tools" className="w-[19px] text-center text-[14px] leading-none text-[#8d8d8d]">»</button>
          <Handle className="mr-0.5 ml-px" />
          <Tools items={lightTools} className="w-[27px]" />
          <Handle />
        </Toolbar>

        <Toolbar>
          <Handle className="mr-px ml-[5px]" />
          <Tools items={filterTools} className="w-[350px]" />
          <Handle className="mr-px ml-1" />
          <Tools items={analysisTools} className="w-[263px]" />
          <Handle className="mr-px ml-[3px]" />
          <Tools items={measureTools} className="w-[58px]" />
        </Toolbar>

        <div className="flex flex-1">
          <LeftDock />
          <RenderPanel />
        </div>

        <svg width="340" height="330" viewBox="0 0 340 330" fill="none" className="pointer-events-none absolute top-0 left-0">
          <path d="M80 225l249 85" stroke="#ff0000" strokeWidth="4" />
          <path d="M59 216l29 1-9 17z" fill="#ff0000" />
        </svg>
        <p className="pointer-events-none absolute top-[298px] left-[338px] font-['Liberation_Sans',sans-serif] text-[24px] leading-[28px] font-bold text-[#ff0000]">
          Select Apply
        </p>
      </div>
    </div>
  );
};

export default App;
